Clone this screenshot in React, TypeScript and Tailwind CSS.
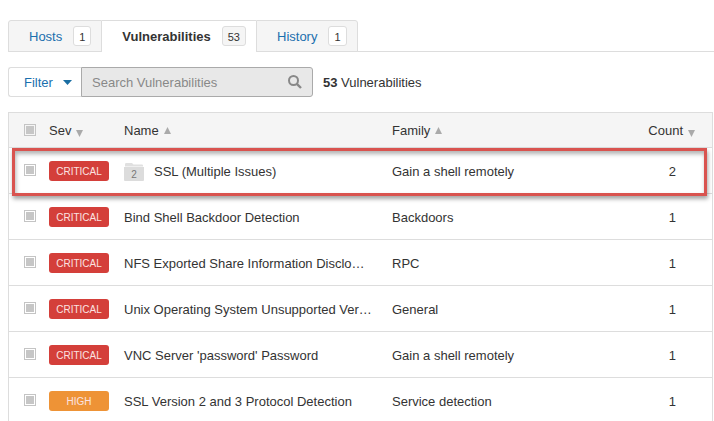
const findings = [
  { severity: 'Critical', name: 'SSL (Multiple Issues)', family: 'Gain a shell remotely', count: 2, group: 2 },
  { severity: 'Critical', name: 'Bind Shell Backdoor Detection', family: 'Backdoors', count: 1 },
  { severity: 'Critical', name: 'NFS Exported Share Information Disclo…', family: 'RPC', count: 1 },
  { severity: 'Critical', name: 'Unix Operating System Unsupported Ver…', family: 'General', count: 1 },
  { severity: 'Critical', name: "VNC Server 'password' Password", family: 'Gain a shell remotely', count: 1 },
  { severity: 'High', name: 'SSL Version 2 and 3 Protocol Detection', family: 'Service detection', count: 1 },
];

const tabs = [
  { label: 'Hosts', count: 1, active: false },
  { label: 'Vulnerabilities', count: 53, active: true },
  { label: 'History', count: 1, active: false },
];

function Check({ label }: { label: string }) {
  return (
    <input
      type="checkbox"
      aria-label={label}
      className="block size-3 appearance-none border border-[#c4c4c4] bg-[#c6c6c6] bg-clip-content p-px checked:bg-[#777]"
    />
  );
}

function Sort({ dir }: { dir: 'up' | 'down' }) {
  return (
    <svg
      aria-hidden="true"
      viewBox="0 0 7 7"
      className={`ml-[5px] inline-block size-[7px] fill-[#aaa] ${dir === 'up' ? 'mb-[3px]' : 'mt-[3px]'}`}
    >
      <path d={dir === 'up' ? 'M3.5 0 7 7H0Z' : 'M0 0H7L3.5 7Z'} />
    </svg>
  );
}

function FolderCount({ count }: { count: number }) {
  return (
    <span className="mr-[10px] inline-grid h-[18px] w-5 shrink-0 place-items-center text-[10px] leading-[10px] text-[#777]">
      <svg aria-hidden="true" viewBox="0 0 20 18" className="col-start-1 row-start-1 size-full">
        <path d="M1 3.4V1.2Q1 0 2.2 0H8L9.5 1.6H18Q19 1.6 19 2.6V3.4Z" fill="#e0e0e0" />
        <path d="M0 4H20V17Q20 18 19 18H1Q0 18 0 17Z" fill="#dcdcdc" />
      </svg>
      <span className="col-start-1 row-start-1 pt-[6px]">{count}</span>
    </span>
  );
}

export default function App() {
  return (
    <main className="h-screen overflow-hidden bg-white pt-5 font-['Liberation_Sans',Arial,sans-serif] text-[13px] leading-5 text-[#333]">
      <nav className="ml-2 flex h-8 border-b border-[#ddd]">
        {tabs.map((tab) => (
          <a
            key={tab.label}
            href="#"
            aria-current={tab.active ? 'page' : undefined}
            className={`flex h-8 items-center gap-[11px] border-t border-b border-t-[#ddd] pr-[10px] pl-5 ${
              tab.active
                ? 'border-b-white bg-white font-bold text-[#333]'
                : 'border-x border-x-[#ddd] border-b-[#ddd] bg-[#f5f5f5] text-[#1a6fae] first:rounded-tl-[3px] last:rounded-tr-[3px]'
            }`}
          >
            <span className="pt-0.5">{tab.label}</span>
            <span
              className={`h-5 rounded-[3px] border border-[#ddd] px-[5px] text-[11px] leading-5 font-normal text-[#333] ${
                tab.active ? 'bg-[#f5f5f5]' : 'bg-white'
              }`}
            >
              {tab.count}
            </span>
          </a>
        ))}
      </nav>

      <div className="mt-[15px] ml-2 flex items-center">
        <button
          type="button"
          className="flex h-[30px] w-[73px] items-center gap-[10px] rounded-l-[3px] border border-r-0 border-[#ddd] bg-white pl-[15px] text-[#1a6fae]"
        >
          <span className="pt-0.5">Filter</span>
          <svg aria-hidden="true" viewBox="0 0 9 5" className="h-[5px] w-[9px] fill-[#1a6ea3]">
            <path d="M0 0H9L4.5 5Z" />
          </svg>
        </button>
        <div className="flex h-[30px] w-[232px] items-center rounded-r-[3px] border border-[#aaa] bg-[#e8e8e8] px-[10px]">
          <input
            type="text"
            aria-label="Search Vulnerabilities"
            placeholder="Search Vulnerabilities"
            className="min-w-0 flex-1 bg-transparent pt-0.5 outline-none placeholder:text-[#888]"
          />
          <svg aria-hidden="true" viewBox="0 0 14 14" className="size-[14px] fill-none stroke-[#888]">
            <circle cx="5.5" cy="5.5" r="4.5" strokeWidth="2" />
            <path d="M8.8 8.8 13 13" strokeWidth="2.4" />
          </svg>
        </div>
        <p className="ml-[10px] pt-0.5">
          <strong>53</strong> Vulnerabilities
        </p>
      </div>

      <div className="mt-[15px] mr-px ml-2 border border-[#ddd]">
        <table className="w-full table-fixed border-separate border-spacing-0 text-left">
          <colgroup>
            <col className="w-10" />
            <col className="w-[75px]" />
            <col className="w-[268px]" />
            <col />
            <col className="w-[90px]" />
          </colgroup>
          <thead>
            <tr className="h-[35px] bg-[#f5f5f5] [&>th]:border-b [&>th]:border-[#ddd] [&>th]:font-normal">
              <th className="pl-[15px]">
                <Check label="Select all" />
              </th>
              <th className="pt-0.5">
                Sev
                <Sort dir="down" />
              </th>
              <th className="pt-0.5">
                Name
                <Sort dir="up" />
              </th>
              <th className="pt-0.5">
                Family
                <Sort dir="up" />
              </th>
              <th className="pt-0.5 pr-[17px] text-right">
                Count
                <Sort dir="down" />
              </th>
            </tr>
          </thead>
          <tbody>
            {findings.map((item, i) => (
              <tr key={item.name} className="relative h-[46px] [&>td]:border-b [&>td]:border-[#ddd]">
                <td className="pb-0.5 pl-[15px]">
                  <Check label={`Select ${item.name}`} />
                  {i === 0 && (
                    <span className="pointer-events-none absolute top-0 right-[5px] -bottom-[2px] left-[3px] border-[3px] border-[#d9534f] shadow-[1px_3px_4px_rgba(0,0,0,0.35),inset_1px_3px_4px_rgba(0,0,0,0.3)]" />
                  )}
                </td>
                <td>
                  <span
                    className={`block h-5 w-[60px] rounded-[3px] text-center text-[10px] leading-[22px] text-[#fbe3e1] uppercase ${
                      item.severity === 'Critical' ? 'bg-[#d43f3a]' : 'bg-[#ee9336]'
                    }`}
                  >
                    {item.severity}
                  </span>
                </td>
                <td className="pt-0.5">
                  <div className="flex items-center">
                    {item.group && <FolderCount count={item.group} />}
                    <span className="whitespace-nowrap">{item.name}</span>
                  </div>
                </td>
                <td className="pt-0.5">{item.family}</td>
                <td className="pt-0.5 pr-9 text-right">{item.count}</td>
              </tr>
            ))}
          </tbody>
        </table>
      </div>
    </main>
  );
}
